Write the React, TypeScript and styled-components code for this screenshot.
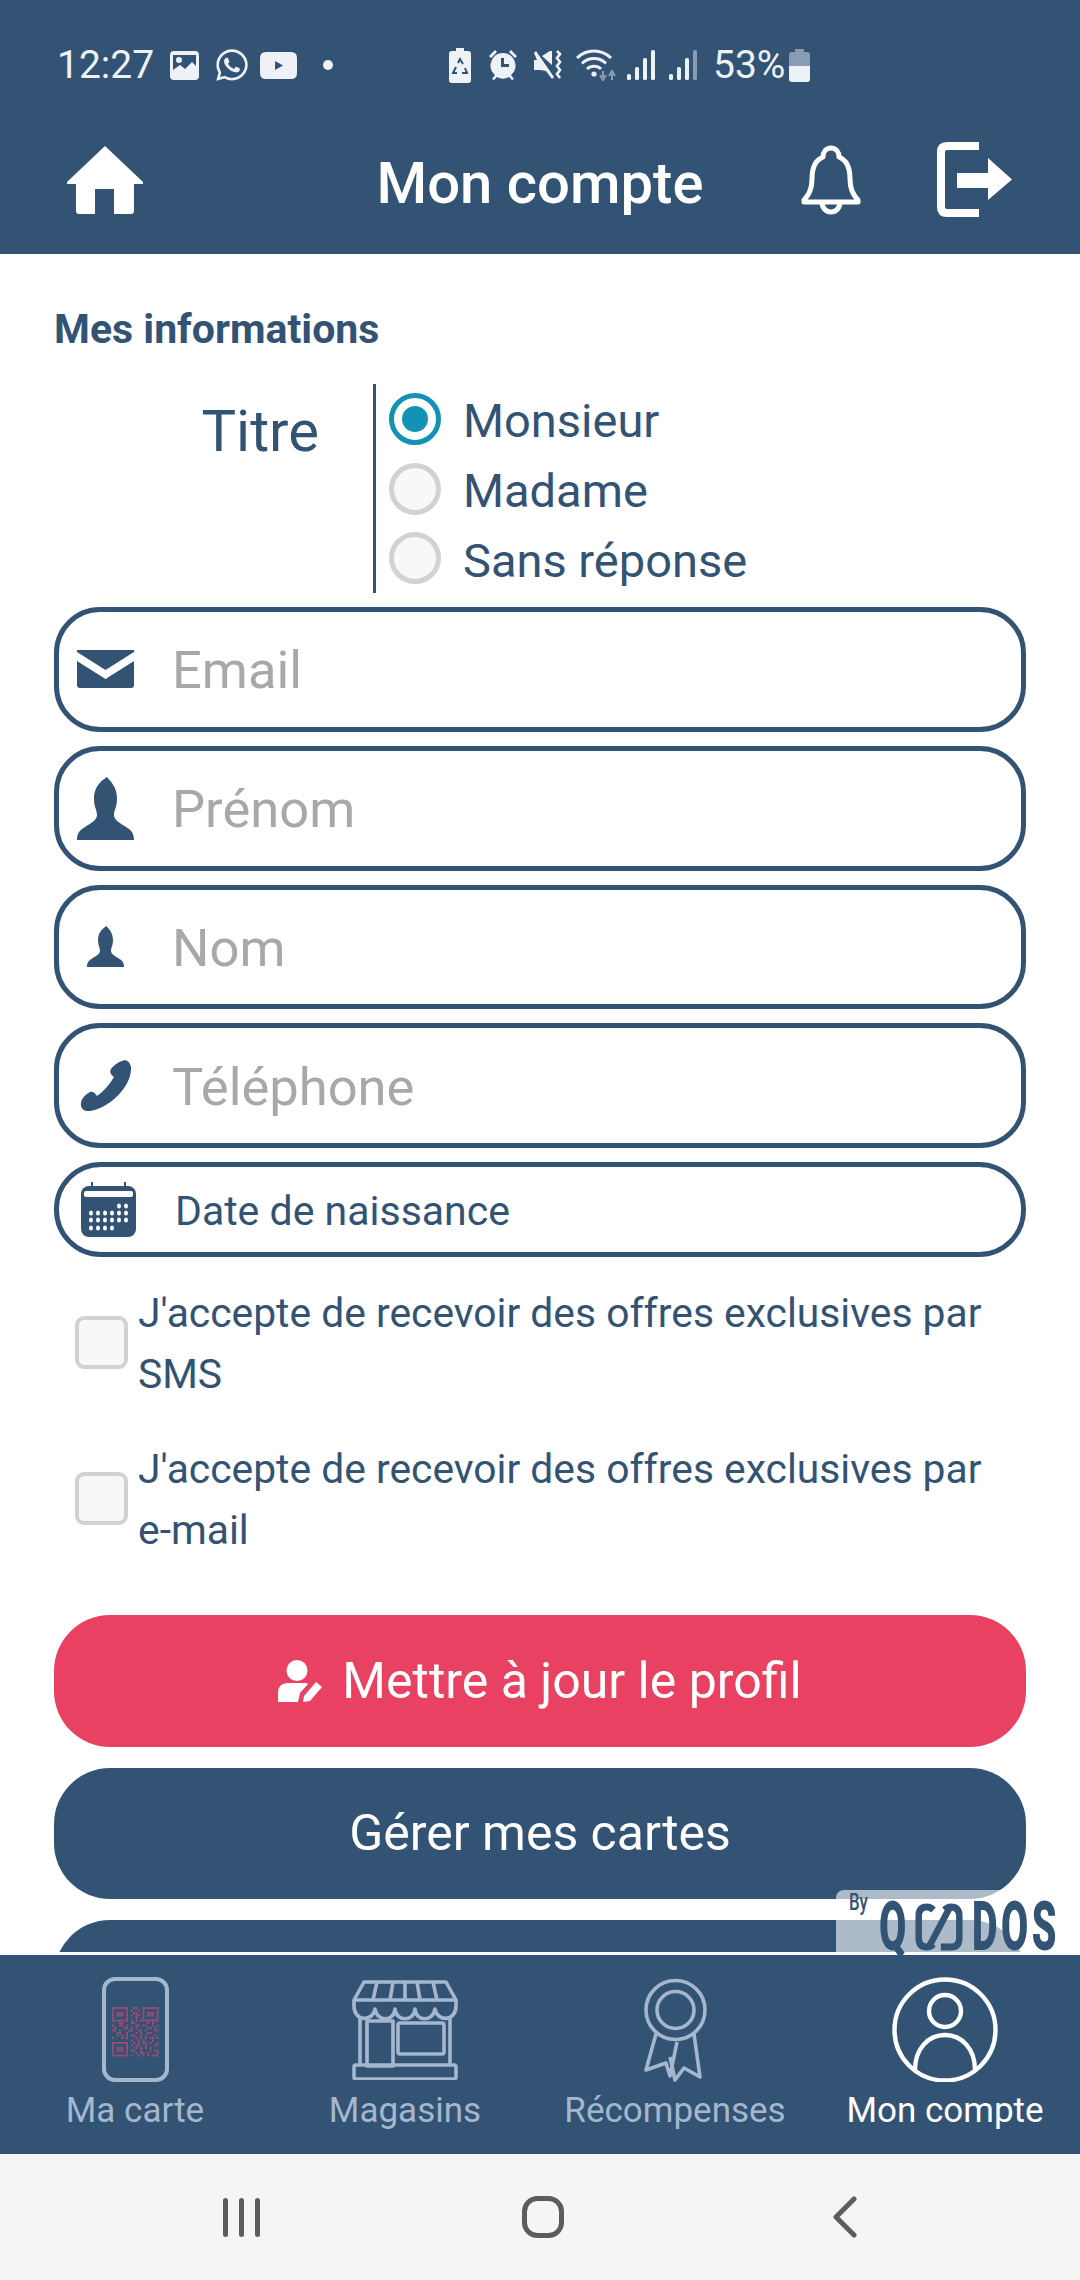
import React from "react";
import styled, { createGlobalStyle } from "styled-components";
import { FaWhatsapp } from "react-icons/fa";

const NAVY = "#335375";
const MUTED = "#a4b7ce";

const GlobalStyle = createGlobalStyle`
  html, body {
    margin: 0;
    padding: 0;
    background: #fff;
    font-family: Roboto, "Liberation Sans", sans-serif;
  }
  * { box-sizing: border-box; }
`;

const Page = styled.div`
  width: 1080px;
  height: 2280px;
  display: flex;
  flex-direction: column;
  overflow: hidden;
  background: #fff;
`;

const TopArea = styled.header`
  height: 254px;
  flex: none;
  background: ${NAVY};
  display: flex;
  flex-direction: column;
`;

const StatusBar = styled.div`
  height: 130px;
  padding: 0 0 0 57px;
  display: flex;
  align-items: center;
  color: #eef2f7;
`;

const StatusTime = styled.span`
  font-size: 39px;
  line-height: 44px;
  width: 113px;
`;

const StatusIcon = styled.svg<{ $gap?: number }>`
  display: block;
  flex: none;
  margin-right: ${(p) => p.$gap ?? 0}px;
  fill: #eef2f7;
`;

const WhatsappIcon = styled(FaWhatsapp)`
  display: block;
  flex: none;
  width: 36px;
  height: 36px;
  margin-right: 10px;
`;

const StatusPercent = styled.span`
  font-size: 39px;
  line-height: 44px;
  width: 76px;
`;

const HeaderBar = styled.div`
  position: relative;
  height: 124px;
  display: flex;
  align-items: center;
  padding: 0 68px 25px 67px;
`;

const HeaderTitle = styled.h1`
  position: absolute;
  left: 0;
  right: 0;
  top: 20px;
  margin: 0;
  text-align: center;
  font-size: 58px;
  line-height: 66px;
  font-weight: 500;
  color: #fff;
`;

const HeaderRight = styled.div`
  margin-left: auto;
  display: flex;
  align-items: center;
  gap: 76px;
`;

const Middle = styled.div`
  position: relative;
  height: 1698px;
  flex: none;
`;

const ScrollArea = styled.main`
  height: 100%;
  overflow: hidden;
  padding: 52px 54px 0;
`;

const SectionTitle = styled.h2`
  margin: 0 0 32px;
  font-size: 41px;
  line-height: 46px;
  font-weight: 700;
  color: ${NAVY};
`;

const TitleRow = styled.div`
  display: flex;
  height: 209px;
  margin-bottom: 14px;
`;

const TitleLabel = styled.div`
  width: 265px;
  padding-top: 13px;
  text-align: right;
  font-size: 58px;
  line-height: 68px;
  color: ${NAVY};
`;

const RadioList = styled.div`
  margin-left: 54px;
  padding-left: 13px;
  border-left: 3px solid ${NAVY};
  display: flex;
  flex-direction: column;
`;

const RadioRow = styled.div`
  height: 70px;
  display: flex;
  align-items: center;
  gap: 22px;
  color: ${NAVY};
`;

const RadioText = styled.span`
  font-size: 47px;
  line-height: 56px;
  margin-top: 5px;
`;

const RadioDot = styled.span<{ $on?: boolean }>`
  width: 52px;
  height: 52px;
  border-radius: 50%;
  border: 5px solid ${(p) => (p.$on ? "#1492b5" : "#d2d2d2")};
  background: ${(p) => (p.$on ? "#fff" : "#f8f8f8")};
  display: flex;
  align-items: center;
  justify-content: center;
  flex: none;

  &::after {
    content: "";
    display: ${(p) => (p.$on ? "block" : "none")};
    width: 26px;
    height: 26px;
    border-radius: 50%;
    background: #1492b5;
  }
`;

const Fields = styled.div`
  display: flex;
  flex-direction: column;
  gap: 14px;
`;

const Field = styled.div<{ $small?: boolean }>`
  height: ${(p) => (p.$small ? "95px" : "124.75px")};
  border: 5px solid ${NAVY};
  border-radius: ${(p) => (p.$small ? "47px" : "46px")};
  display: flex;
  align-items: center;
  position: relative;
  padding-left: ${(p) => (p.$small ? "116px" : "113px")};
`;

const FieldIconSlot = styled.span<{ $left?: number }>`
  position: absolute;
  left: ${(p) => p.$left ?? 15}px;
  top: 0;
  bottom: 0;
  width: 62px;
  display: flex;
  align-items: center;
  justify-content: center;
`;

const Placeholder = styled.span`
  font-size: 52.5px;
  line-height: 60px;
  margin-top: 2px;
  color: #a8a8a8;
`;

const DateText = styled.span`
  font-size: 41px;
  line-height: 48px;
  margin-top: 2px;
  color: ${NAVY};
`;

const Consents = styled.div`
  margin-top: 24.5px;
  display: flex;
  flex-direction: column;
  gap: 34px;
`;

const ConsentRow = styled.div`
  height: 122px;
  display: flex;
  align-items: center;
  padding-left: 21px;
  gap: 10px;
`;

const CheckBox = styled.span`
  width: 53px;
  height: 53px;
  flex: none;
  border: 4px solid #d2d2d2;
  border-radius: 9px;
  background: #f8f8f8;
`;

const ConsentText = styled.span`
  margin-top: 2px;
  font-size: 40.8px;
  line-height: 61px;
  color: ${NAVY};
`;

const NoBreak = styled.span`
  white-space: nowrap;
`;

const Actions = styled.div`
  margin-top: 55.5px;
  display: flex;
  flex-direction: column;
  gap: 21px;
`;

const ActionButton = styled.button<{ $red?: boolean }>`
  height: 131.5px;
  width: 100%;
  flex: none;
  border: 0;
  border-radius: 56px;
  background: ${(p) => (p.$red ? "#e84161" : NAVY)};
  color: #fff;
  font-family: inherit;
  font-size: 50px;
  display: flex;
  align-items: center;
  justify-content: center;
  gap: 20px;
`;

const Watermark = styled.div`
  position: absolute;
  left: 836px;
  bottom: 0;
  width: 224px;
  height: 62px;
  border-radius: 8px 8px 0 0;
  background: rgba(255, 255, 255, 0.6);
  color: ${NAVY};
`;

const WatermarkBy = styled.span`
  position: absolute;
  left: 13px;
  top: 0;
  font-size: 24px;
  line-height: 24px;
  font-weight: 500;
  transform: scaleX(0.7);
  transform-origin: left top;
`;

const WatermarkWord = styled.span<{ $left: number }>`
  position: absolute;
  left: ${(p) => p.$left}px;
  bottom: 0;
  font-size: 68px;
  line-height: 50px;
  font-weight: 900;
  letter-spacing: 6px;
  white-space: nowrap;
  transform: scaleX(0.58);
  transform-origin: left bottom;
`;

const WatermarkMark = styled.svg`
  position: absolute;
  left: 79px;
  bottom: 1px;
`;

const BottomNav = styled.nav`
  margin-top: 3px;
  height: 199px;
  flex: none;
  background: ${NAVY};
  display: grid;
  grid-template-columns: repeat(4, 270px);
  padding-top: 22px;
`;

const NavItem = styled.div<{ $active?: boolean }>`
  display: flex;
  flex-direction: column;
  align-items: center;
  color: ${(p) => (p.$active ? "#fff" : MUTED)};
`;

const NavIconBox = styled.div`
  height: 105px;
  display: flex;
  align-items: center;
`;

const NavLabel = styled.span`
  margin-top: 9px;
  font-size: 35px;
  line-height: 40px;
`;

const SystemBar = styled.div`
  flex: 1;
  background: #f5f5f5;
  display: grid;
  grid-template-columns: repeat(3, 302px);
  padding-left: 90px;
  align-items: center;
  justify-items: center;
`;

const Plain = styled.svg`
  display: block;
  flex: none;
`;

// qr code cells for the card icon, rough pattern, not a real code
const qrRows = [
  "1111111.0110.1111111",
  "1.....1.1.01.1.....1",
  "1.111.1.0110.1.111.1",
  "1.111.1.1011.1.111.1",
  "1.....1.0.10.1.....1",
  "1111111.1.1.11111111",
  "..0110..110.0.01.1..",
  "10.11.1.0.11.11.01.1",
  ".1.0.11.101..0.11.1.",
  "11.1.0.110.11.1.0.11",
  "0.11..1.0.1.1.011.0.",
  "..1.101.11.01.1.0.1.",
  "1.0.1.1.0.1.1.1.11.1",
  "..0.....1.01.1.0.1..",
  "1111111.01.1.11.1.01",
  "1.....1.1.110.1.0.11",
  "1.111.1.0.1.1.1.1.0.",
  "1.111.1.11.01.0.1.11",
  "1.....1.0.1.11.1.0.1",
  "1111111.1.01.1.1.111",
];

const QrCells = () => (
  <g fill="#ac4a72">
    {qrRows.flatMap((row, y) =>
      row.split("").map((c, x) =>
        c === "1" ? (
          <rect key={`${x}-${y}`} x={10 + x * 2.35} y={30 + y * 2.5} width={1.9} height={2} />
        ) : null,
      ),
    )}
  </g>
);

const CardIcon = () => (
  <Plain width="67" height="105" viewBox="0 0 67 105" fill="none">
    <rect x="2" y="2" width="63" height="101" rx="11" stroke={MUTED} strokeWidth="4" />
    <QrCells />
  </Plain>
);

const ShopIcon = () => (
  <Plain width="106" height="100" viewBox="0 0 106 100" fill="none" stroke={MUTED} strokeWidth="3.6" strokeLinejoin="round">
    <path d="M12 2H94L104 20H2Z" />
    <path d="M25 2L21 20M41 2L38 20M53 2V20M65 2L68 20M81 2L85 20" />
    <path d="M2 20V26C2 42 21 42 23 29C25 42 42 42 43 29C44 42 62 42 63 29C64 42 81 42 83 29C85 42 104 42 104 26V20" />
    <path d="M8 38V86M98 38V86" />
    <rect x="15" y="41" width="26" height="45" />
    <rect x="46" y="43" width="46" height="31" rx="2" />
    <rect x="2" y="85" width="102" height="14" rx="2" />
  </Plain>
);

const AwardIcon = () => (
  <Plain width="63" height="105" viewBox="0 0 63 105" fill="none" stroke={MUTED} strokeWidth="3.6">
    <circle cx="31.5" cy="33" r="29.5" />
    <circle cx="31.5" cy="33" r="18.5" />
    <path d="M12 57L2 93L22 86L26 99L33 65" strokeLinejoin="round" />
    <path d="M50 57L56 100L40 91L31 103L26 80" strokeLinejoin="round" />
  </Plain>
);

const AccountIcon = () => (
  <Plain width="106" height="105" viewBox="0 0 106 105" fill="none" stroke="#fff" strokeWidth="4.4">
    <circle cx="53" cy="53" r="50.5" />
    <circle cx="53" cy="34" r="16" />
    <path d="M23 93C23 72 36 58 53 58C70 58 83 72 83 93" />
  </Plain>
);

const HomeIcon = () => (
  <Plain width="76" height="68" viewBox="0 0 76 68" fill="#fff">
    <path d="M38 0L76 36V38H67V65Q67 68 64 68H47V43H28V68H12Q9 68 9 65V38H0V36Z" />
  </Plain>
);

const BellIcon = () => (
  <Plain width="60" height="70" viewBox="0 0 60 70" fill="none" stroke="#fff" strokeWidth="5" strokeLinejoin="round">
    <path d="M30 3C25 3 22 7 22 12C12 16 11 26 11 34C11 44 8 50 3 55V57H57V55C52 50 49 44 49 34C49 26 48 16 38 12C38 7 35 3 30 3Z" />
    <path d="M21 57C21 63 25 67 30 67C35 67 39 63 39 57" />
  </Plain>
);

const ExitIcon = () => (
  <Plain width="75" height="75" viewBox="0 0 75 75">
    <path d="M42 4H10Q4 4 4 10V65Q4 71 10 71H42" fill="none" stroke="#fff" strokeWidth="8" />
    <path d="M20 31H51V16L75 37.5L51 58V46H20Z" fill="#fff" />
  </Plain>
);

const MailIcon = () => (
  <Plain width="57" height="38" viewBox="0 0 57 38" fill={NAVY}>
    <path d="M0 0H57V2L28.5 20L0 2Z" />
    <path d="M0 11L28.5 29L57 11V35Q57 38 54 38H3Q0 38 0 35Z" />
  </Plain>
);

const PersonIcon = ({ width, height }: { width: number; height: number }) => (
  <Plain width={width} height={height} viewBox="0 0 57 63" fill={NAVY}>
    <path d="M30 0C26 3 17 8 17 22C17 30 20 33 20 38C20 43 14 46 8 50C3 53 0 56 0 63H57C57 56 54 53 49 50C43 46 37 43 37 38C37 33 40 30 40 22C40 10 34 5 30 0Z" />
  </Plain>
);

const PhoneIcon = () => (
  <Plain width="51" height="51" viewBox="0 0 51 51" fill={NAVY}>
    <path d="M42 1C46 -1 50 2 51 7C52 25 32 47 10 51C4 52 0 48 1 43C1 39 6 34 10 32C13 31 15 33 17 36C24 31 30 24 34 17C31 15 29 12 31 9C33 6 38 2 42 1Z" />
  </Plain>
);

const calendarDots = [
  [38, 24], [45, 24],
  [10, 31], [17, 31], [24, 31], [31, 31], [38, 31], [45, 31],
  [10, 38], [17, 38], [24, 38], [31, 38], [38, 38], [45, 38],
  [10, 46], [17, 46], [24, 46], [31, 46],
];

const CalendarIcon = () => (
  <Plain width="55" height="55" viewBox="0 0 55 55">
    <path d="M11 0V7M44 0V7" stroke={NAVY} strokeWidth="2" />
    <rect x="0" y="4" width="55" height="51" rx="8" fill={NAVY} />
    <rect x="3" y="9" width="49" height="6" rx="2" fill="#fff" />
    {calendarDots.map(([cx, cy], i) => (
      <ellipse key={i} cx={cx} cy={cy} rx="2" ry="2.6" fill="#fff" />
    ))}
  </Plain>
);

const UserEditIcon = () => (
  <Plain width="44" height="42" viewBox="0 0 44 42" fill="#fff">
    <circle cx="19" cy="10.5" r="10.5" />
    <path d="M0 42V33Q0 23 10 23H27Q29 23 30 24L22 33L20 42Z" />
    <path d="M25 42L26 36L38 22L44 27L32 41Z" />
  </Plain>
);

const RecentsIcon = () => (
  <Plain width="40" height="39" viewBox="0 0 40 39" fill="#5c5c5c">
    <rect x="2" y="0" width="5" height="39" rx="2.5" />
    <rect x="18" y="0" width="5" height="39" rx="2.5" />
    <rect x="34" y="0" width="5" height="39" rx="2.5" />
  </Plain>
);

const HomeSquareIcon = () => (
  <Plain width="42" height="42" viewBox="0 0 42 42" fill="none">
    <rect x="2.5" y="2.5" width="37" height="37" rx="13" stroke="#5c5c5c" strokeWidth="5" />
  </Plain>
);

const BackIcon = () => (
  <Plain width="24" height="42" viewBox="0 0 24 42" fill="none">
    <path d="M21 3L3 21L21 39" stroke="#5c5c5c" strokeWidth="5" strokeLinecap="round" strokeLinejoin="round" />
  </Plain>
);

const App = () => (
  <Page>
    <GlobalStyle />
    <TopArea>
      <StatusBar>
        <StatusTime>12:27</StatusTime>
        <StatusIcon $gap={15} width="29" height="29" viewBox="0 0 29 29">
          <path fillRule="evenodd" d="M4 0H25Q29 0 29 4V25Q29 29 25 29H4Q0 29 0 25V4Q0 0 4 0ZM3 4V19L10 14L15 18L22 11L26 15V4ZM9 6A3 3 0 1 1 9 12A3 3 0 1 1 9 6Z" />
        </StatusIcon>
        <WhatsappIcon />
        <StatusIcon $gap={26} width="37" height="27" viewBox="0 0 37 27">
          <path fillRule="evenodd" d="M6 0H31Q37 0 37 6V21Q37 27 31 27H6Q0 27 0 21V6Q0 0 6 0ZM15 9V18L23 13.5Z" />
        </StatusIcon>
        <StatusIcon $gap={116} width="10" height="10" viewBox="0 0 10 10">
          <circle cx="5" cy="5" r="5" />
        </StatusIcon>
        <StatusIcon $gap={17} width="22" height="35" viewBox="0 0 22 35">
          <path d="M7 0H15V3H19Q22 3 22 6V32Q22 35 19 35H3Q0 35 0 32V6Q0 3 3 3H7Z" />
          <path d="M9 15L11 11L14 16M16 20L18 25H13M8 25H4L7 19" fill="none" stroke={NAVY} strokeWidth="2" />
        </StatusIcon>
        <StatusIcon $gap={15} width="30" height="30" viewBox="0 0 30 30">
          <path d="M1 6L7 0L9 2L3 8ZM29 6L23 0L21 2L27 8Z" />
          <path fillRule="evenodd" d="M15 3A12.5 12.5 0 0 1 23 25L26 29L24 30L21 27A12.5 12.5 0 0 1 9 27L6 30L4 29L7 25A12.5 12.5 0 0 1 15 3ZM13 8V17H21V14H16V8Z" />
        </StatusIcon>
        <StatusIcon $gap={13} width="30" height="30" viewBox="0 0 30 30">
          <path d="M1 3L3 1L21 27L19 29L13 21L7 20H1V10H4Z" />
          <path d="M9 6L17 1H19V15Z" />
          <path d="M24 1L27 4L24 8L27 12L24 16L27 20L24 24L27 28" fill="none" stroke="#eef2f7" strokeWidth="2.6" />
        </StatusIcon>
        <StatusIcon $gap={9} width="42" height="32" viewBox="0 0 42 32">
          <path d="M1 9A24 24 0 0 1 35 9" fill="none" stroke="#eef2f7" strokeWidth="3" />
          <path d="M6 14.5A17 17 0 0 1 30 14.5" fill="none" stroke="#eef2f7" strokeWidth="3" />
          <path d="M11 20A10 10 0 0 1 25 20" fill="none" stroke="#eef2f7" strokeWidth="3" />
          <circle cx="18" cy="25" r="2.6" />
          <path d="M27 22V28M24 26L27 31L30 26M36 31V24M33 27L36 22L39 27" fill="none" stroke="#8a9cb4" strokeWidth="2" />
        </StatusIcon>
        <StatusIcon $gap={14} width="28" height="30" viewBox="0 0 28 30">
          <rect x="0" y="24" width="4" height="6" rx="1.5" />
          <rect x="8" y="17" width="4" height="13" rx="1.5" />
          <rect x="16" y="8" width="4" height="22" rx="1.5" />
          <rect x="24" y="0" width="4" height="30" rx="1.5" />
        </StatusIcon>
        <StatusIcon $gap={16} width="28" height="30" viewBox="0 0 28 30">
          <rect x="0" y="24" width="4" height="6" rx="1.5" />
          <rect x="8" y="17" width="4" height="13" rx="1.5" />
          <rect x="16" y="8" width="4" height="22" rx="1.5" />
          <rect x="24" y="0" width="4" height="30" rx="1.5" fill="#8a9cb4" />
        </StatusIcon>
        <StatusPercent>53%</StatusPercent>
        <StatusIcon width="21" height="33" viewBox="0 0 21 33">
          <path d="M6 0H15V3H18Q21 3 21 6V17H0V6Q0 3 3 3H6Z" fill="#8a9cb4" />
          <path d="M0 17H21V30Q21 33 18 33H3Q0 33 0 30Z" />
        </StatusIcon>
      </StatusBar>
      <HeaderBar>
        <HomeIcon />
        <HeaderTitle>Mon compte</HeaderTitle>
        <HeaderRight>
          <BellIcon />
          <ExitIcon />
        </HeaderRight>
      </HeaderBar>
    </TopArea>

    <Middle>
      <ScrollArea>
        <SectionTitle>Mes informations</SectionTitle>
        <TitleRow>
          <TitleLabel>Titre</TitleLabel>
          <RadioList>
            <RadioRow>
              <RadioDot $on />
              <RadioText>Monsieur</RadioText>
            </RadioRow>
            <RadioRow>
              <RadioDot />
              <RadioText>Madame</RadioText>
            </RadioRow>
            <RadioRow>
              <RadioDot />
              <RadioText>Sans réponse</RadioText>
            </RadioRow>
          </RadioList>
        </TitleRow>

        <Fields>
          <Field>
            <FieldIconSlot>
              <MailIcon />
            </FieldIconSlot>
            <Placeholder>Email</Placeholder>
          </Field>
          <Field>
            <FieldIconSlot>
              <PersonIcon width={57} height={63} />
            </FieldIconSlot>
            <Placeholder>Prénom</Placeholder>
          </Field>
          <Field>
            <FieldIconSlot>
              <PersonIcon width={39} height={41} />
            </FieldIconSlot>
            <Placeholder>Nom</Placeholder>
          </Field>
          <Field>
            <FieldIconSlot>
              <PhoneIcon />
            </FieldIconSlot>
            <Placeholder>Téléphone</Placeholder>
          </Field>
          <Field $small>
            <FieldIconSlot $left={18}>
              <CalendarIcon />
            </FieldIconSlot>
            <DateText>Date de naissance</DateText>
          </Field>
        </Fields>

        <Consents>
          <ConsentRow>
            <CheckBox />
            <ConsentText>J'accepte de recevoir des offres exclusives par SMS</ConsentText>
          </ConsentRow>
          <ConsentRow>
            <CheckBox />
            <ConsentText>
              J'accepte de recevoir des offres exclusives par <NoBreak>e-mail</NoBreak>
            </ConsentText>
          </ConsentRow>
        </Consents>

        <Actions>
          <ActionButton $red>
            <UserEditIcon />
            Mettre à jour le profil
          </ActionButton>
          <ActionButton>Gérer mes cartes</ActionButton>
          <ActionButton />
        </Actions>
      </ScrollArea>

      <Watermark>
        <WatermarkBy>By</WatermarkBy>
        <WatermarkWord $left={43}>Q</WatermarkWord>
        <WatermarkMark width="48" height="48" viewBox="0 0 52 48" fill="none" stroke={NAVY} strokeWidth="7" preserveAspectRatio="none">
          <path d="M20 7Q17 4 13 4Q4 4 4 13V35Q4 44 13 44Q17 44 20 41" />
          <path d="M38 4L15 44" />
          <path d="M32 7Q35 4 39 4Q48 4 48 13V35Q48 44 39 44H28" />
        </WatermarkMark>
        <WatermarkWord $left={136}>DOS</WatermarkWord>
      </Watermark>
    </Middle>

    <BottomNav>
      <NavItem>
        <NavIconBox>
          <CardIcon />
        </NavIconBox>
        <NavLabel>Ma carte</NavLabel>
      </NavItem>
      <NavItem>
        <NavIconBox>
          <ShopIcon />
        </NavIconBox>
        <NavLabel>Magasins</NavLabel>
      </NavItem>
      <NavItem>
        <NavIconBox>
          <AwardIcon />
        </NavIconBox>
        <NavLabel>Récompenses</NavLabel>
      </NavItem>
      <NavItem $active>
        <NavIconBox>
          <AccountIcon />
        </NavIconBox>
        <NavLabel>Mon compte</NavLabel>
      </NavItem>
    </BottomNav>

    <SystemBar>
      <RecentsIcon />
      <HomeSquareIcon />
      <BackIcon />
    </SystemBar>
  </Page>
);

export default App;
